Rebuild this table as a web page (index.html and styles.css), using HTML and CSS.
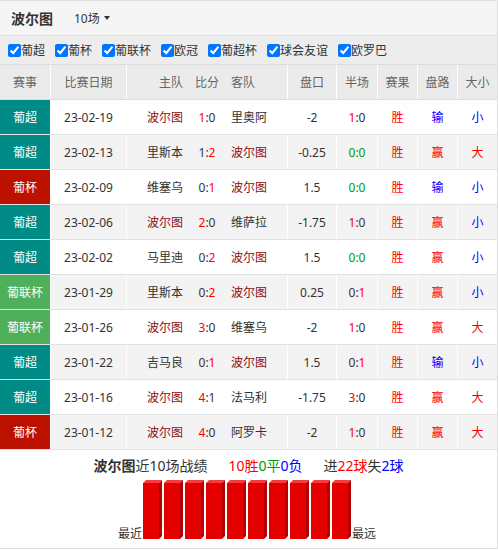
FILE: index.html
```html
<!DOCTYPE html>
<html lang="zh">
<head>
<meta charset="utf-8">
<title>波尔图近10场战绩</title>
<link rel="stylesheet" href="styles.css">
</head>
<body>
<div class="panel">
  <div class="titlebar">
    <span class="team-title">波尔图</span>
    <span class="count">10场<span class="caret"></span></span>
  </div>
  <div class="filters">
    <label class="filter"><input type="checkbox" checked>葡超</label>
    <label class="filter"><input type="checkbox" checked>葡杯</label>
    <label class="filter"><input type="checkbox" checked>葡联杯</label>
    <label class="filter"><input type="checkbox" checked>欧冠</label>
    <label class="filter"><input type="checkbox" checked>葡超杯</label>
    <label class="filter"><input type="checkbox" checked>球会友谊</label>
    <label class="filter"><input type="checkbox" checked>欧罗巴</label>
  </div>
  <div class="table">
    <div class="row head">
      <div class="c">赛事</div>
      <div class="c">比赛日期</div>
      <div class="c match"><span class="home">主队</span><span class="score">比分</span><span class="away">客队</span></div>
      <div class="c">盘口</div>
      <div class="c">半场</div>
      <div class="c">赛果</div>
      <div class="c">盘路</div>
      <div class="c">大小</div>
    </div>

    <div class="row">
      <div class="c ev ev-chao">葡超</div>
      <div class="c">23-02-19</div>
      <div class="c match"><span class="home por">波尔图</span><span class="score"><i class="r">1</i>:0</span><span class="away">里奥阿</span></div>
      <div class="c">-2</div>
      <div class="c"><i class="r">1</i>:0</div>
      <div class="c r">胜</div>
      <div class="c b">输</div>
      <div class="c b">小</div>
    </div>

    <div class="row alt">
      <div class="c ev ev-chao">葡超</div>
      <div class="c">23-02-13</div>
      <div class="c match"><span class="home">里斯本</span><span class="score">1:<i class="r">2</i></span><span class="away por">波尔图</span></div>
      <div class="c">-0.25</div>
      <div class="c g">0:0</div>
      <div class="c r">胜</div>
      <div class="c r">赢</div>
      <div class="c r">大</div>
    </div>

    <div class="row">
      <div class="c ev ev-cup">葡杯</div>
      <div class="c">23-02-09</div>
      <div class="c match"><span class="home">维塞乌</span><span class="score">0:<i class="r">1</i></span><span class="away por">波尔图</span></div>
      <div class="c">1.5</div>
      <div class="c g">0:0</div>
      <div class="c r">胜</div>
      <div class="c b">输</div>
      <div class="c b">小</div>
    </div>

    <div class="row alt">
      <div class="c ev ev-chao">葡超</div>
      <div class="c">23-02-06</div>
      <div class="c match"><span class="home por">波尔图</span><span class="score"><i class="r">2</i>:0</span><span class="away">维萨拉</span></div>
      <div class="c">-1.75</div>
      <div class="c"><i class="r">1</i>:0</div>
      <div class="c r">胜</div>
      <div class="c r">赢</div>
      <div class="c b">小</div>
    </div>

    <div class="row">
      <div class="c ev ev-chao">葡超</div>
      <div class="c">23-02-02</div>
      <div class="c match"><span class="home">马里迪</span><span class="score">0:<i class="r">2</i></span><span class="away por">波尔图</span></div>
      <div class="c">1.5</div>
      <div class="c g">0:0</div>
      <div class="c r">胜</div>
      <div class="c r">赢</div>
      <div class="c b">小</div>
    </div>

    <div class="row alt">
      <div class="c ev ev-league">葡联杯</div>
      <div class="c">23-01-29</div>
      <div class="c match"><span class="home">里斯本</span><span class="score">0:<i class="r">2</i></span><span class="away por">波尔图</span></div>
      <div class="c">0.25</div>
      <div class="c">0:<i class="r">1</i></div>
      <div class="c r">胜</div>
      <div class="c r">赢</div>
      <div class="c b">小</div>
    </div>

    <div class="row">
      <div class="c ev ev-league">葡联杯</div>
      <div class="c">23-01-26</div>
      <div class="c match"><span class="home por">波尔图</span><span class="score"><i class="r">3</i>:0</span><span class="away">维塞乌</span></div>
      <div class="c">-2</div>
      <div class="c"><i class="r">1</i>:0</div>
      <div class="c r">胜</div>
      <div class="c r">赢</div>
      <div class="c r">大</div>
    </div>

    <div class="row alt">
      <div class="c ev ev-chao">葡超</div>
      <div class="c">23-01-22</div>
      <div class="c match"><span class="home">吉马良</span><span class="score">0:<i class="r">1</i></span><span class="away por">波尔图</span></div>
      <div class="c">1.5</div>
      <div class="c">0:<i class="r">1</i></div>
      <div class="c r">胜</div>
      <div class="c b">输</div>
      <div class="c b">小</div>
    </div>

    <div class="row">
      <div class="c ev ev-chao">葡超</div>
      <div class="c">23-01-16</div>
      <div class="c match"><span class="home por">波尔图</span><span class="score"><i class="r">4</i>:1</span><span class="away">法马利</span></div>
      <div class="c">-1.75</div>
      <div class="c"><i class="r">3</i>:0</div>
      <div class="c r">胜</div>
      <div class="c r">赢</div>
      <div class="c r">大</div>
    </div>

    <div class="row alt">
      <div class="c ev ev-cup">葡杯</div>
      <div class="c">23-01-12</div>
      <div class="c match"><span class="home por">波尔图</span><span class="score"><i class="r">4</i>:0</span><span class="away">阿罗卡</span></div>
      <div class="c">-2</div>
      <div class="c"><i class="r">1</i>:0</div>
      <div class="c r">胜</div>
      <div class="c r">赢</div>
      <div class="c r">大</div>
    </div>
  </div>

  <div class="summary">
    <div class="stats">
      <span class="grp"><b>波尔图</b>近10场战绩</span>
      <span class="grp"><span class="r">10胜</span><span class="g">0平</span><span class="b">0负</span></span>
      <span class="grp">进<span class="r">22球</span>失<span class="b">2球</span></span>
    </div>
    <div class="chart">
      <span class="end">最近</span>
      <svg class="bars" width="208" height="60" viewBox="0 0 208 60">
        <defs>
          <g id="bar">
            <polygon points="0,3 3,0 19,0 16,3" fill="#f43c3c"/>
            <rect x="0" y="3" width="16" height="56" fill="#e50000"/>
            <polygon points="16,3 19,0 19,56 16,59" fill="#b40000"/>
          </g>
        </defs>
        <use href="#bar" x="0"/>
        <use href="#bar" x="21"/>
        <use href="#bar" x="42"/>
        <use href="#bar" x="63"/>
        <use href="#bar" x="84"/>
        <use href="#bar" x="105"/>
        <use href="#bar" x="126"/>
        <use href="#bar" x="147"/>
        <use href="#bar" x="168"/>
        <use href="#bar" x="189"/>
      </svg>
      <span class="end">最远</span>
    </div>
  </div>
</div>
</body>
</html>
```

FILE: styles.css
```css
* { box-sizing: border-box; }
html, body { margin: 0; padding: 0; background: #fff; }
body {
  font-family: "Noto Sans", "Noto Sans CJK SC", sans-serif;
  font-size: 12px;
  color: #333;
}
i { font-style: normal; }

.panel {
  width: 498px;
  height: 549px;
  border-top: 1px solid #dddddd;
  border-right: 1px solid #dddddd;
  border-bottom: 1px solid #dddddd;
  display: flex;
  flex-direction: column;
}

.titlebar {
  height: 35px;
  background: #f5f5f5;
  border-bottom: 1px solid #dddddd;
  display: flex;
  align-items: center;
  padding-left: 11px;
}
.team-title {
  font-size: 14px;
  font-weight: bold;
  color: #333;
}
.count {
  margin-left: 21px;
  display: inline-flex;
  align-items: center;
  color: #333;
}
.caret {
  display: inline-block;
  margin-left: 4px;
  width: 0;
  height: 0;
  border-left: 3.5px solid transparent;
  border-right: 3.5px solid transparent;
  border-top: 4px solid #333;
}

.filters {
  height: 29px;
  background: #ededed;
  border-bottom: 1px solid #dddddd;
  display: flex;
  align-items: center;
  padding-left: 8px;
}
.filter {
  display: inline-flex;
  align-items: center;
  margin-right: 10px;
  color: #333;
}
.filter input {
  margin: 0;
  width: 13px;
  height: 13px;
}

.row {
  display: grid;
  grid-template-columns: 50px 75px 160px 48px 40px 39px 39px 39px;
  column-gap: 1px;
  height: 35px;
  background: #fff;
  border-bottom: 1px solid #e2e2e2;
  --cell: #fff;
}
.row.alt { --cell: #f3f3f3; }
.row.head { --cell: #ebebeb; border-bottom-color: #dddddd; color: #666; }

.c {
  background: var(--cell);
  display: flex;
  align-items: center;
  justify-content: center;
  white-space: nowrap;
}
.ev { color: #fff; }
.ev-chao { background: #008b86; }
.ev-cup { background: #bd1100; }
.ev-league { background: #4fb05c; }

.match {
  display: grid;
  grid-template-columns: 56px 48px 56px;
  align-items: center;
}
.home { text-align: right; }
.score { text-align: center; }
.away { text-align: left; }
.por { color: #8e0d0d; }

.r { color: #ff0000; }
.g { color: #009a00; }
.b { color: #0000ff; }

.summary {
  flex: 1;
  display: flex;
  flex-direction: column;
  align-items: center;
  padding-top: 6px;
}
.stats {
  font-size: 14px;
  line-height: 20px;
  color: #333;
  display: flex;
}
.stats .grp + .grp { margin-left: 21px; }
.stats b { font-weight: bold; }

.chart {
  margin-top: 4px;
  display: flex;
  align-items: flex-end;
  margin-left: -3px;
}
.bars { display: block; margin: 0 1px; }
.end {
  font-size: 12px;
  line-height: 12px;
  color: #333;
}
```
